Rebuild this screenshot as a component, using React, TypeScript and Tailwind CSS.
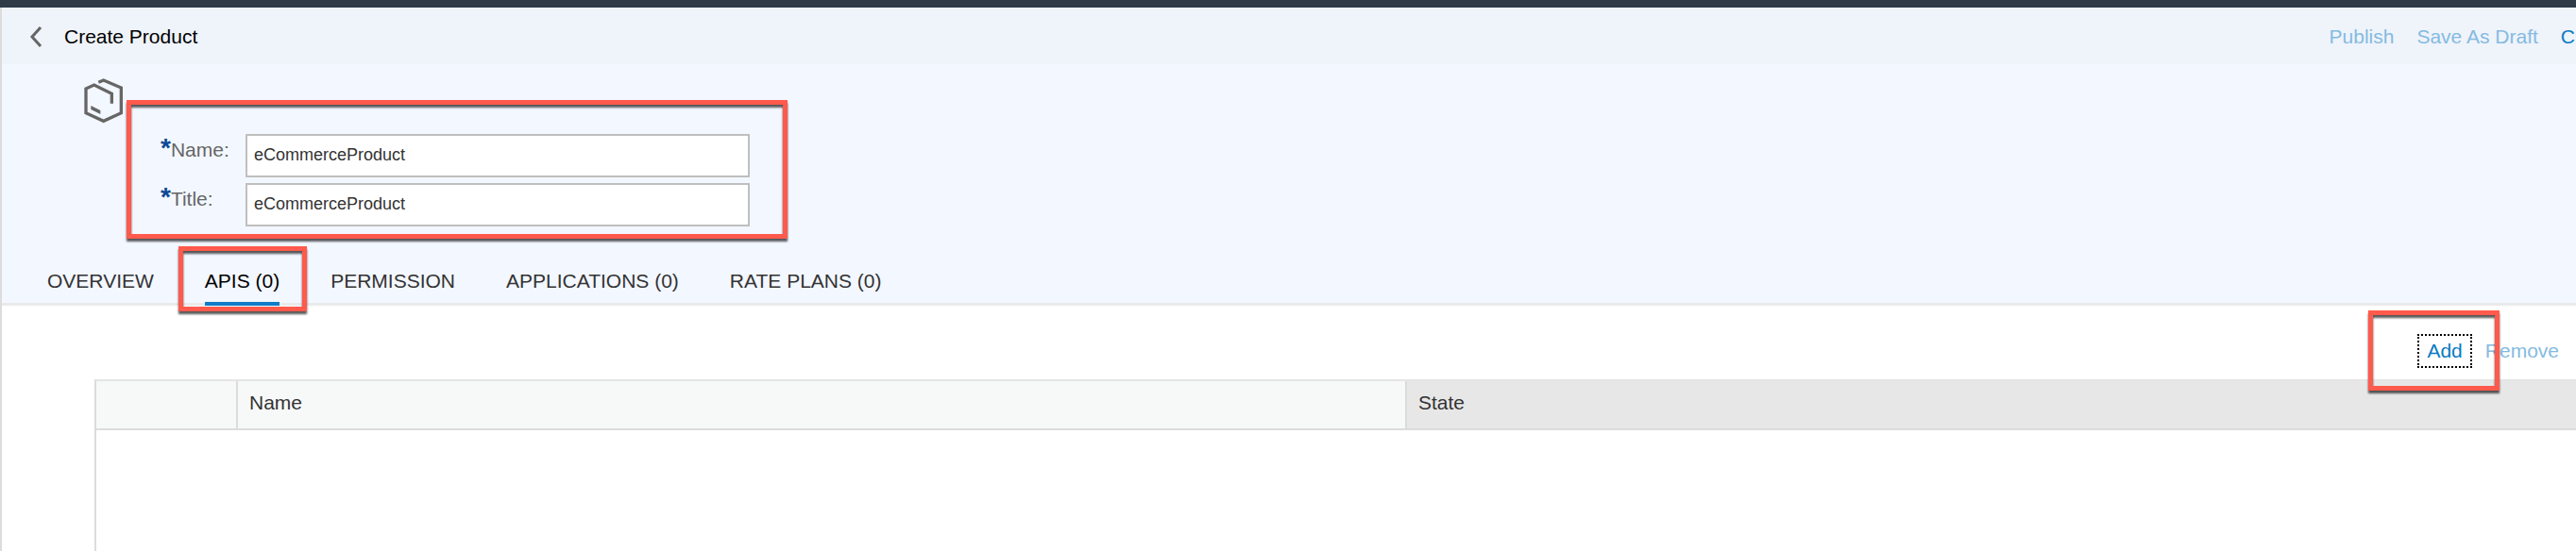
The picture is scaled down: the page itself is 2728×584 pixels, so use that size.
import { useState } from "react";

const tabs = ["OVERVIEW", "APIS (0)", "PERMISSION", "APPLICATIONS (0)", "RATE PLANS (0)"];

function Highlight({ className }: { className: string }) {
  return (
    <span
      aria-hidden="true"
      className={`pointer-events-none absolute z-10 border-[5px] border-[#ff5a4c] drop-shadow-[0_3px_1px_rgba(0,0,0,0.65)] ${className}`}
    />
  );
}

function BackIcon() {
  return (
    <svg width="14" height="22" viewBox="0 0 14 22" fill="none" stroke="#666666" strokeWidth="3" aria-hidden="true">
      <path d="M12 1 L3 11 L12 21" />
    </svg>
  );
}

function ProductIcon() {
  return (
    <svg className="h-[50px] w-11 shrink-0" viewBox="24 18 132 150" fill="none" aria-hidden="true">
      <path
        d="M115 104 V73 L59 45 L33 57 V134 L89 160 L145 134 V54 L89 30 L73 37"
        stroke="#666666"
        strokeWidth="10"
      />
      <path d="M49 111 L79 126 V138 L49 123 Z" fill="#666666" />
    </svg>
  );
}

function Field({ id, label }: { id: string; label: string }) {
  const [value, setValue] = useState("eCommerceProduct");
  return (
    <div className="flex items-start">
      <label htmlFor={id} className="flex h-[30px] w-[90px] shrink-0 items-baseline text-[21px] leading-[30px] text-[#666666]">
        <span className="text-[28px] font-bold text-[#0a4a94]">*</span>
        {label}:
      </label>
      <input
        id={id}
        type="text"
        value={value}
        onChange={(e) => setValue(e.target.value)}
        className="h-[46px] w-full max-w-[534px] border-2 border-[#bfbfbf] bg-white px-[7px] pb-0.5 text-[18px] text-[#333333] outline-none"
      />
    </div>
  );
}

export default function App() {
  const [active, setActive] = useState("APIS (0)");
  return (
    <div className="flex min-h-screen flex-col overflow-hidden bg-white font-['Liberation_Sans',Arial,sans-serif] text-[21px] leading-6 text-[#333333]">
      <div className="h-2 bg-[#2f3b47]" />
      <div className="flex flex-1 flex-col border-l-2 border-[#dcdcdc]">
        <header className="flex h-[60px] items-center justify-between bg-[#eff3fa] pt-0.5 pr-px pl-[29px]">
          <div className="flex items-center gap-[23px]">
            <button type="button" aria-label="Back">
              <BackIcon />
            </button>
            <h1 className="text-black">Create Product</h1>
          </div>
          <div className="flex gap-6 whitespace-nowrap text-[#84bbe1]">
            <button type="button">Publish</button>
            <button type="button">Save As Draft</button>
            <button type="button" className="text-[#0a7bc4]">C</button>
          </div>
        </header>

        <section className="border-b-[3px] border-[#eaeaea] bg-[#f3f7ff]">
          <div className="flex gap-[38px] pt-[13px] pl-[86px]">
            <ProductIcon />
            <form className="relative mt-[61px] flex w-[624px] flex-col gap-1.5">
              <Field id="product-name" label="Name" />
              <Field id="product-title" label="Title" />
              <Highlight className="-top-9 -right-10 -bottom-[13px] -left-9" />
            </form>
          </div>
          <nav className="mt-[45px] flex gap-[54px] pl-12 whitespace-nowrap">
            {tabs.map((tab) => (
              <div key={tab} className="relative">
                <button
                  type="button"
                  onClick={() => setActive(tab)}
                  className={`-mb-[3px] h-[39px] border-b-4 pb-[9px] ${
                    tab === active ? "border-[#0f7dc7] text-black" : "border-transparent"
                  }`}
                >
                  {tab}
                </button>
                {tab === "APIS (0)" && <Highlight className="-top-6 -right-[29px] -bottom-[9px] -left-7" />}
              </div>
            ))}
          </nav>
        </section>

        <main className="flex flex-1 flex-col">
          <div className="flex h-[78px] items-center justify-end gap-3.5 pt-[18px] pr-[18px]">
            <div className="relative">
              <button type="button" className="flex h-9 items-center border-2 border-dotted border-black px-2 text-[#0a7bc4]">
                Add
              </button>
              <Highlight className="-top-[25px] -right-[29px] -bottom-6 -left-[52px]" />
            </div>
            <button type="button" className="text-[#84bbe1]">
              Remove
            </button>
          </div>
          <div className="ml-[98px] flex-1 border-t-2 border-l-2 border-t-[#e5e5e5] border-l-[#dcdcdc]">
            <table className="w-full table-fixed border-separate border-spacing-0 text-left">
              <thead>
                <tr className="h-[52px]">
                  <th aria-label="Selection" className="w-[150px] border-r-2 border-b-2 border-[#dcdcdc] bg-[#f7f9f9]" />
                  <th className="w-[47.14%] border-r-2 border-b-2 border-[#dcdcdc] bg-[#f7f9f9] pb-1 pl-3 font-normal">
                    Name
                  </th>
                  <th className="border-b-2 border-[#dcdcdc] bg-[#e7e7e7] pb-1 pl-3 font-normal">State</th>
                </tr>
              </thead>
            </table>
          </div>
        </main>
      </div>
    </div>
  );
}
